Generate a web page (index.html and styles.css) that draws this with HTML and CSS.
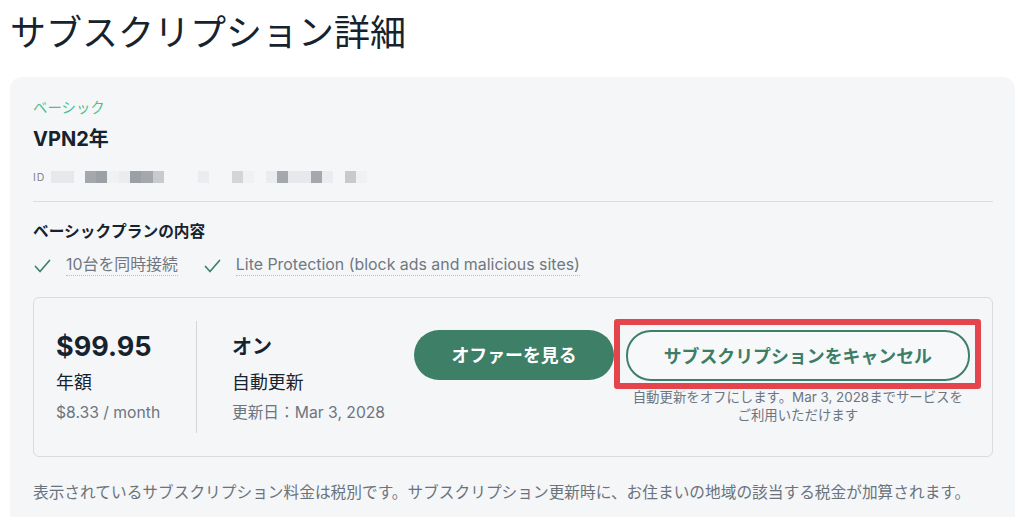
FILE: index.html
```html
<!DOCTYPE html>
<html lang="ja">
<head>
<meta charset="utf-8">
<title>サブスクリプション詳細</title>
<link rel="stylesheet" href="styles.css">
</head>
<body>
<main class="page">
  <h1 class="page-title">サブスクリプション詳細</h1>
  <section class="card">
    <div class="plan-tier">ベーシック</div>
    <div class="plan-name">VPN2年</div>
    <div class="plan-id">
      <span class="id-label">ID</span>
      <span class="id-pixels">
        <i class="px px-a"></i><i class="px px-a"></i><i class="px"></i><i class="px px-b"></i><i class="px px-b2"></i><i class="px px-e"></i><i class="px px-d"></i><i class="px px-b2"></i><i class="px px-b"></i><i class="px px-c"></i><i class="px"></i><i class="px"></i><i class="px"></i><i class="px px-d"></i><i class="px"></i><i class="px"></i><i class="px px-c2"></i><i class="px px-e"></i><i class="px"></i><i class="px px-d"></i><i class="px px-b"></i><i class="px px-a"></i><i class="px px-a"></i><i class="px px-b"></i><i class="px px-d"></i><i class="px"></i><i class="px px-c"></i><i class="px px-e"></i>
      </span>
    </div>
    <hr class="divider">
    <h2 class="features-title">ベーシックプランの内容</h2>
    <ul class="features">
      <li class="feature">
        <svg class="check" viewBox="0 0 18 18" aria-hidden="true"><path d="M2.5 9.5 L7 14.5 L16.5 3.5"/></svg>
        <span class="feature-text">10台を同時接続</span>
      </li>
      <li class="feature">
        <svg class="check" viewBox="0 0 18 18" aria-hidden="true"><path d="M2.5 9.5 L7 14.5 L16.5 3.5"/></svg>
        <span class="feature-text">Lite Protection (block ads and malicious sites)</span>
      </li>
    </ul>
    <div class="billing">
      <div class="price-col">
        <div class="price">$99.95</div>
        <div class="price-period">年額</div>
        <div class="price-monthly">$8.33 / month</div>
      </div>
      <div class="renew-col">
        <div class="renew-status">オン</div>
        <div class="renew-label">自動更新</div>
        <div class="renew-date">更新日：Mar 3, 2028</div>
      </div>
      <div class="actions">
        <button class="btn btn-primary" type="button">オファーを見る</button>
        <div class="cancel-group">
          <div class="highlight">
            <button class="btn btn-outline" type="button">サブスクリプションをキャンセル</button>
          </div>
          <p class="cancel-note">自動更新をオフにします。Mar 3, 2028までサービスを<br>ご利用いただけます</p>
        </div>
      </div>
    </div>
    <p class="tax-note">表示されているサブスクリプション料金は税別です。サブスクリプション更新時に、お住まいの地域の該当する税金が加算されます。</p>
  </section>
</main>
</body>
</html>
```

FILE: styles.css
```css
* {
  box-sizing: border-box;
}

html, body {
  margin: 0;
  padding: 0;
  background: #ffffff;
}

body {
  font-family: Inter, "Noto Sans CJK JP", sans-serif;
  color: #15232f;
  overflow: hidden;
}

.page {
  padding: 0 9px 0 10px;
}

.page-title {
  margin: 0;
  padding-top: 6px;
  font-family: "Noto Sans CJK JP", sans-serif;
  font-size: 36px;
  line-height: 48px;
  font-weight: 400;
  color: #16232e;
}

.card {
  margin-top: 23px;
  background: #f5f6f8;
  border-radius: 12px 12px 0 0;
  padding: 20px 22px 13px 23px;
}

.plan-tier {
  font-family: "Noto Sans CJK JP", sans-serif;
  font-size: 14.4px;
  line-height: 20px;
  color: #4dbf8f;
}

.plan-name {
  margin-top: 9px;
  font-size: 20px;
  line-height: 26px;
  font-weight: 700;
}

.plan-id {
  margin-top: 17px;
  height: 16px;
  display: flex;
  align-items: center;
}

.id-label {
  font-size: 10.5px;
  letter-spacing: 1px;
  color: #7f868e;
  width: 18px;
}

.id-pixels {
  display: flex;
  height: 12px;
}

.px {
  display: block;
  width: 11.3px;
  height: 12px;
}

.px-a { background: #e7e8eb; }
.px-b { background: #a4a8ad; }
.px-b2 { background: #9b9fa6; }
.px-c { background: #c8cace; }
.px-c2 { background: #d3d5d9; }
.px-d { background: #ebecef; }
.px-e { background: #f0f1f3; }

.divider {
  margin: 16px 0 0;
  border: 0;
  border-top: 1px solid #d9dde1;
  height: 0;
}

.features-title {
  margin: 18px 0 0;
  font-family: "Noto Sans CJK JP", sans-serif;
  font-size: 15.7px;
  line-height: 22px;
  font-weight: 700;
}

.features {
  list-style: none;
  margin: 13px 0 0;
  padding: 0;
  display: flex;
  gap: 25px;
}

.feature {
  display: flex;
  align-items: center;
  gap: 15px;
  line-height: 24px;
  font-size: 15.9px;
  color: #6f7882;
}

.check {
  width: 18px;
  height: 18px;
  fill: none;
  stroke: #3b8467;
  stroke-width: 1.7;
  stroke-linecap: round;
  stroke-linejoin: round;
}

.feature-text {
  border-bottom: 1px dotted #b9bfc6;
  line-height: 20px;
}

.billing {
  margin-top: 21px;
  display: flex;
  align-items: stretch;
  padding: 23px 22px 23px 22px;
  border: 1px solid #d8dbdf;
  border-radius: 6px;
}

.price-col {
  width: 141px;
  min-height: 112px;
  border-right: 1px solid #d2d6da;
  display: flex;
  flex-direction: column;
  justify-content: center;
}

.price {
  font-size: 27px;
  line-height: 34px;
  font-weight: 700;
}

.price-period {
  margin-top: 6px;
  font-size: 17.9px;
  line-height: 26px;
}

.price-monthly {
  margin-top: 6px;
  font-size: 15.7px;
  line-height: 22px;
  color: #6b7580;
}

.renew-col {
  padding-left: 35px;
  display: flex;
  flex-direction: column;
  justify-content: center;
}

.renew-status {
  font-size: 20px;
  line-height: 34px;
  font-weight: 700;
}

.renew-label {
  margin-top: 6px;
  font-size: 17.9px;
  line-height: 26px;
}

.renew-date {
  margin-top: 6px;
  font-size: 15.7px;
  line-height: 22px;
  color: #6b7580;
}

.actions {
  margin-left: auto;
  align-self: center;
  display: flex;
  align-items: flex-start;
  gap: 12px;
}

.btn {
  height: 50px;
  border-radius: 25px;
  font-family: "Noto Sans CJK JP", sans-serif;
  font-size: 17.9px;
  font-weight: 700;
  line-height: 1;
  cursor: pointer;
}

.btn-primary {
  background: #3d8067;
  color: #ffffff;
  border: 0;
  padding: 0 37px;
}

.btn-outline {
  background: #f7f8fa;
  color: #3d7d65;
  border: 2px solid #3d8067;
  padding: 0 36px;
  height: 51px;
}

.cancel-group {
  display: flex;
  flex-direction: column;
  align-items: center;
}

.highlight {
  position: relative;
  display: flex;
}

.highlight::after {
  content: "";
  position: absolute;
  top: -11px;
  bottom: -8px;
  left: -12px;
  right: -11px;
  border: 6px solid #e4454c;
  border-radius: 3px;
  pointer-events: none;
}

.cancel-note {
  margin: 7px 0 0;
  font-size: 13.4px;
  line-height: 18px;
  color: #6b7580;
  text-align: center;
}

.tax-note {
  margin: 23px 0 0;
  font-family: "Noto Sans CJK JP", sans-serif;
  font-size: 15.7px;
  line-height: 24px;
  color: #6a737c;
}
```
